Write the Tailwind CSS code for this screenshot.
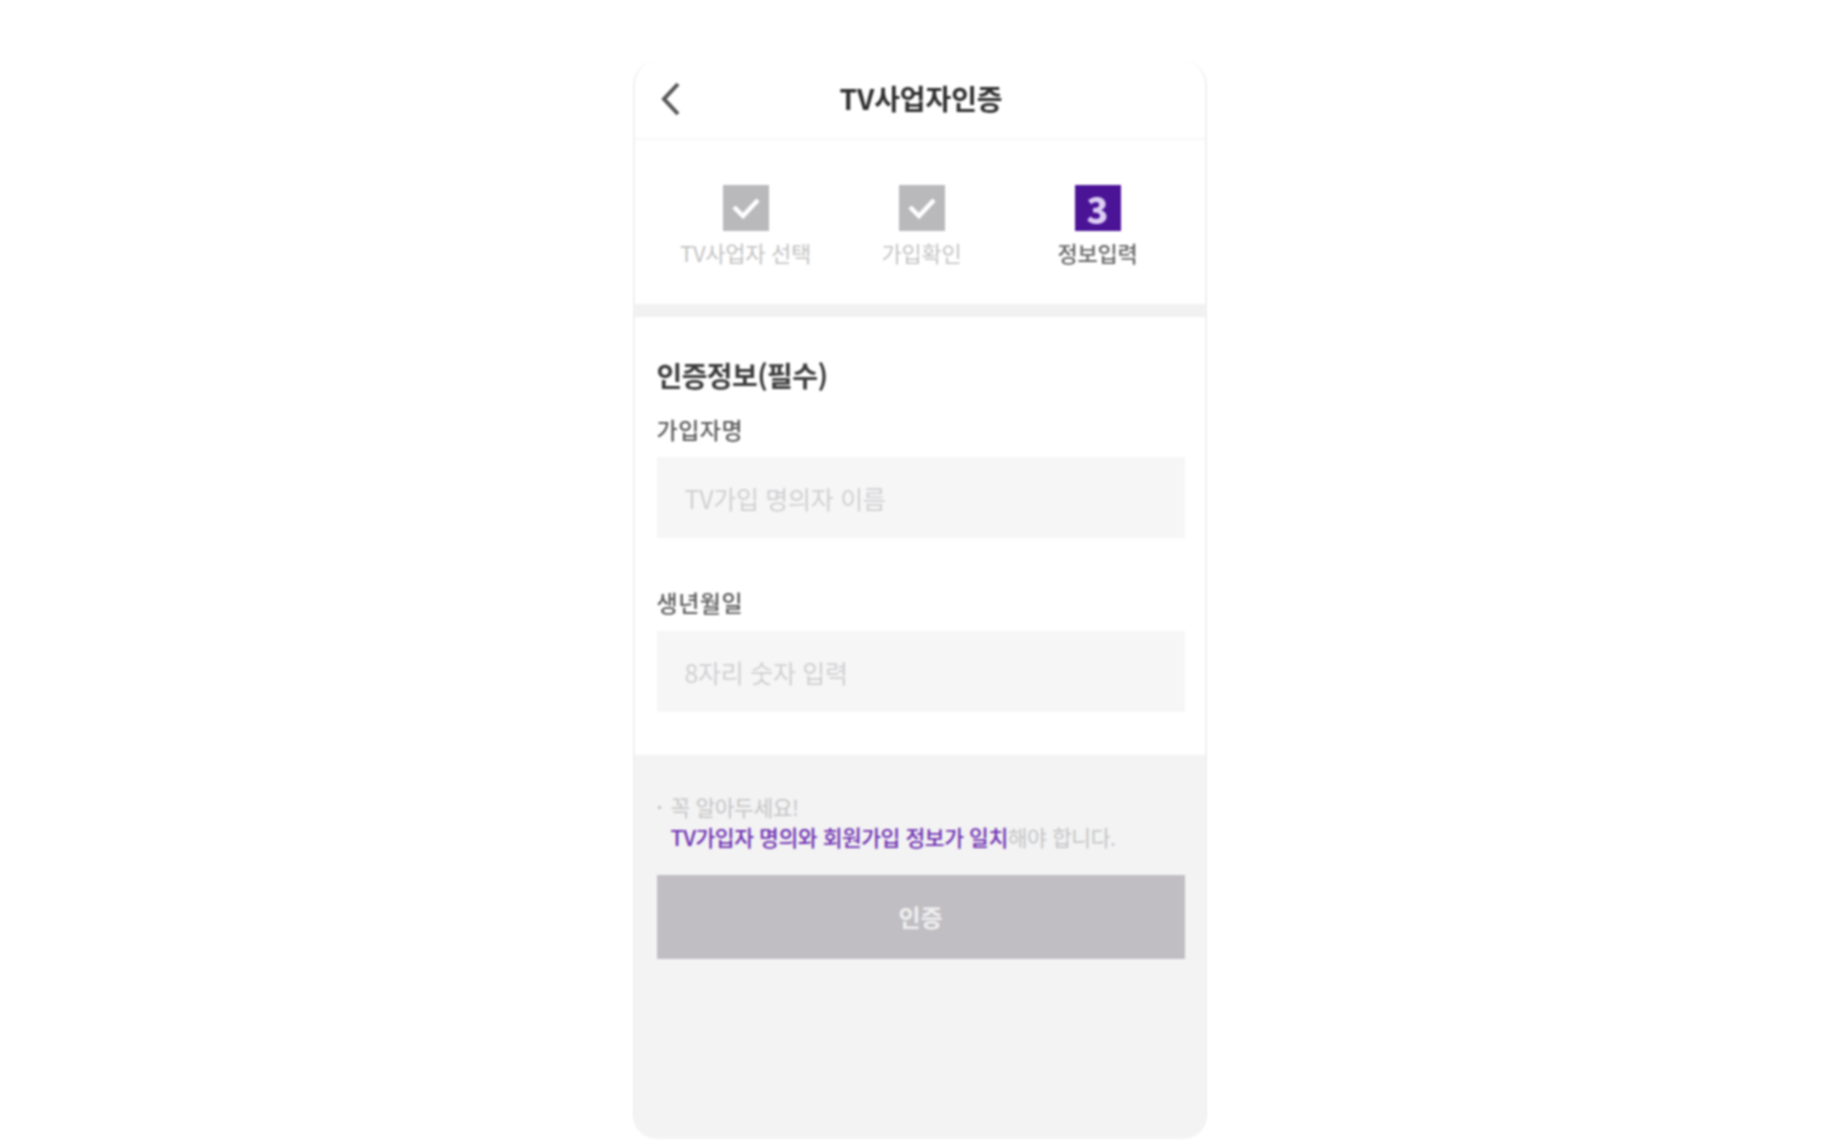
<!DOCTYPE html>
<html lang="ko">
<head>
  <meta charset="UTF-8" />
  <meta name="viewport" content="width=device-width, initial-scale=1.0" />
  <title>TV사업자인증</title>
  <script src="https://cdn.jsdelivr.net/npm/@tailwindcss/browser@4"></script>
</head>
<body class="bg-white h-screen overflow-hidden flex justify-center pl-[3px] font-['Noto_Sans_CJK_KR','Noto_Sans',sans-serif]">

  <div class="mt-[61px] w-[574px] h-[1078px] flex flex-col rounded-[24px] overflow-hidden border-x-2 border-[#f0f0f0] bg-white blur-[1.2px]">

    <!-- header -->
    <div class="h-[79px] shrink-0 relative flex items-center justify-center pl-[3px] border-b-2 border-[#f8f8f8]">
      <button class="absolute left-[24px] top-[20px]">
        <svg width="24" height="36" viewBox="0 0 24 36" fill="none" stroke="#555" stroke-width="4"><path d="M19 3 L5 18 L19 33" /></svg>
      </button>
      <h1 class="text-[28px] font-bold tracking-[-0.1px] text-[#2f2f2f] leading-none mt-[-4px]">TV사업자인증</h1>
    </div>

    <!-- steps -->
    <div class="h-[164px] shrink-0 pt-[45px] pl-[4px] flex justify-center">
      <div class="w-[176px] flex flex-col items-center gap-[8px]">
        <div class="w-[46px] h-[46px] bg-[#b9b9bc] flex items-center justify-center">
          <svg width="30" height="24" viewBox="0 0 30 24" fill="none" stroke="#fff" stroke-width="4.5"><path d="M3 11 L12 20 L27 4" /></svg>
        </div>
        <span class="text-[22px] leading-[26px] tracking-[-0.3px] text-[#c2c2c2]">TV사업자 선택</span>
      </div>
      <div class="w-[176px] flex flex-col items-center gap-[8px]">
        <div class="w-[46px] h-[46px] bg-[#b9b9bc] flex items-center justify-center">
          <svg width="30" height="24" viewBox="0 0 30 24" fill="none" stroke="#fff" stroke-width="4.5"><path d="M3 11 L12 20 L27 4" /></svg>
        </div>
        <span class="text-[22px] leading-[26px] tracking-[-0.3px] text-[#c2c2c2]">가입확인</span>
      </div>
      <div class="w-[176px] flex flex-col items-center gap-[8px]">
        <div class="w-[46px] h-[46px] bg-[#4b1497] flex items-center justify-center text-[36px] font-black leading-none text-[#dccdf3]">3</div>
        <span class="text-[22px] leading-[26px] tracking-[-0.3px] font-medium text-[#666]">정보입력</span>
      </div>
    </div>

    <div class="h-[13px] shrink-0 bg-[#f1f1f1]"></div>

    <!-- form -->
    <div class="h-[438px] shrink-0 pl-[22px] pr-[20px] pt-[38px]">
      <h2 class="text-[28px] font-bold leading-[40px] tracking-[-0.6px] text-[#3c3c3c]">인증정보(필수)</h2>

      <label class="block mt-[19px] text-[23px] font-medium leading-[30px] tracking-[0.5px] text-[#5c5c5c]">가입자명</label>
      <input type="text" placeholder="TV가입 명의자 이름"
        class="mt-[13px] block w-full h-[81px] px-[28px] bg-[#f6f6f6] text-[25px] tracking-[-0.3px] placeholder:text-[#cfcfd2] outline-none" />

      <label class="block mt-[49px] text-[23px] font-medium leading-[30px] tracking-[0.5px] text-[#5c5c5c]">생년월일</label>
      <input type="text" placeholder="8자리 숫자 입력"
        class="mt-[14px] block w-full h-[81px] px-[28px] bg-[#f6f6f6] text-[25px] tracking-[-0.3px] placeholder:text-[#cfcfd2] outline-none" />
    </div>

    <!-- notice + button -->
    <div class="flex-1 bg-[#f3f3f3] pl-[22px] pr-[20px] pt-[37px]">
      <ul class="text-[21.5px] leading-[30px] tracking-[-0.45px] text-[#c4c4c6]">
        <li class="relative pl-[14px] before:content-[''] before:absolute before:left-[1px] before:top-[14px] before:w-[3px] before:h-[3px] before:bg-[#c4c4c6]">
          꼭 알아두세요!<br />
          <span class="font-medium text-[#6d2fb0]">TV가입자 명의와 회원가입 정보가 일치</span>해야 합니다.
        </li>
      </ul>
      <button class="mt-[23px] block w-full h-[84px] bg-[#c0bec3] text-[24px] font-bold text-[#f0f0f0]">인증</button>
    </div>
  </div>

</body>
</html>
